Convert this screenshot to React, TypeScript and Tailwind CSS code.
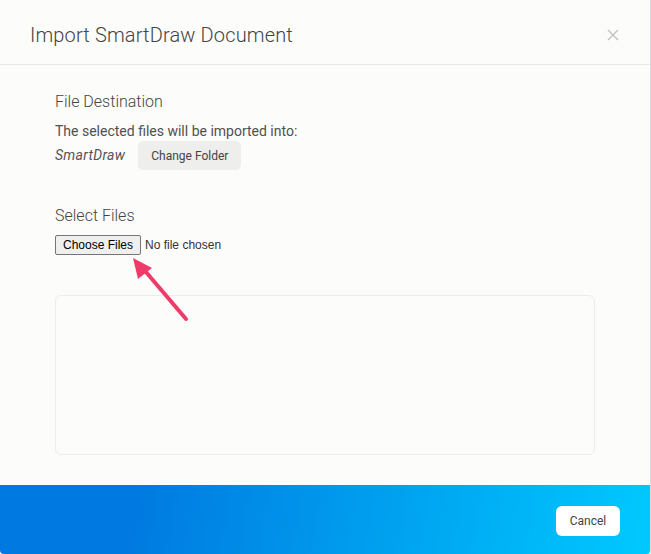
import React from "react";

const Arrow = () => (
  <svg className="absolute left-0 top-0 pointer-events-none" width="651" height="554">
    <line x1="186" y1="319" x2="140" y2="265" stroke="#ef3b6a" strokeWidth="4" strokeLinecap="round" />
    <polygon points="133,258 138,279 152,268" fill="#ef3b6a" />
  </svg>
);

const App: React.FC = () => {
  return (
    <div className="relative w-[651px] h-[554px] bg-[#fcfcfa] border-r border-[#dcdcdc] overflow-hidden rounded-b-[4px] font-['Roboto',sans-serif] text-[#4a4a4a]">
      <div className="h-[65px] pl-[30px] pr-[31px] pt-[5px] flex items-center justify-between border-b border-[#e8e8e6]">
        <h1 className="text-[20px] font-light text-[#444] tracking-[0.15px]">Import SmartDraw Document</h1>
        <svg width="12" height="12" viewBox="0 0 12 12">
          <path d="M1 1L11 11M11 1L1 11" stroke="#c2c2c2" strokeWidth="1.4" />
        </svg>
      </div>

      <div className="px-[55px] pt-[25px] h-[420px]">
        <div className="text-[16px] leading-[24px] font-light text-[#444]">File Destination</div>
        <div className="mt-[7px] text-[14px] leading-[20px] text-[#505050]">The selected files will be imported into:</div>
        <div className="flex items-center">
          <span className="italic text-[14px] text-[#555] tracking-[0.3px] mr-[13px]">SmartDraw</span>
          <button className="h-[29px] px-[13px] bg-[#eeeeec] rounded-[5px] text-[12px] text-[#444]">Change Folder</button>
        </div>

        <div className="mt-[34px] text-[16px] leading-[24px] font-light text-[#444]">Select Files</div>
        <div className="mt-[7px] flex items-center font-['Liberation_Sans',sans-serif]">
          <span className="h-[20px] px-[7px] flex items-center bg-[#efefef] border border-[#767676] rounded-[2px] text-[12px] text-black">Choose Files</span>
          <span className="ml-[4px] text-[12px] text-[#333]">No file chosen</span>
        </div>

        <div className="mt-[40px] h-[160px] w-[540px] border border-[#ececea] rounded-[6px]" />
      </div>

      <div className="h-[69px] bg-linear-[100deg] from-[#0079e0] from-20% to-[#00c9ff] flex items-start justify-end pt-[21px] pr-[30px]">
        <button className="w-[64px] h-[30px] bg-white rounded-[6px] text-[12px] text-[#444]">Cancel</button>
      </div>

      <Arrow />
    </div>
  );
};

export default App;
